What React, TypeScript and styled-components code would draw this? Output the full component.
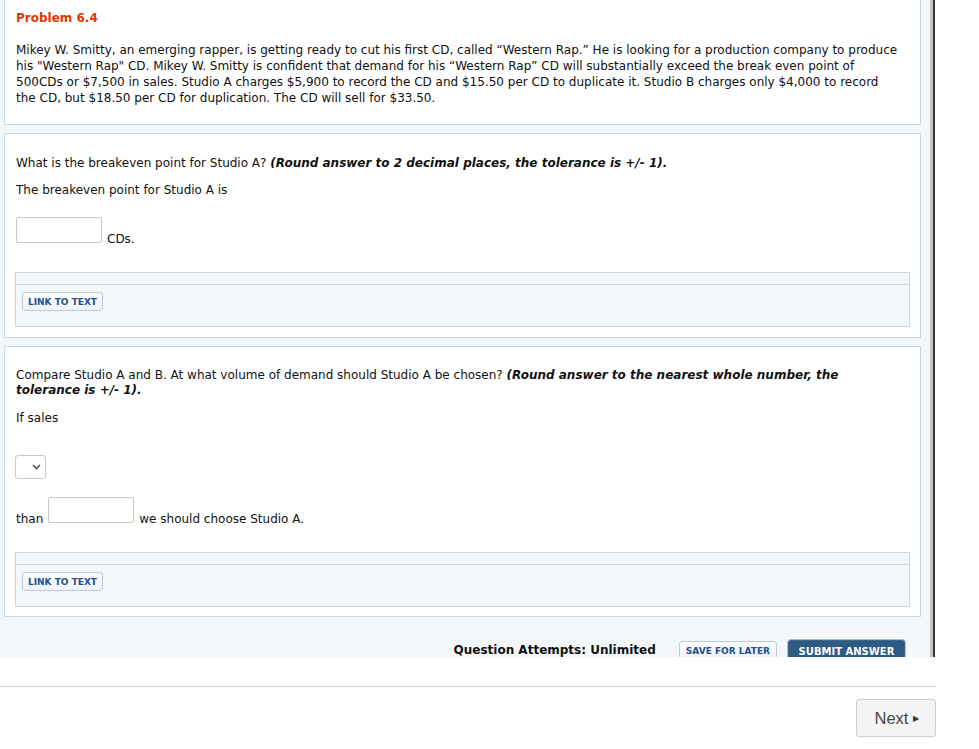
import React from "react";
import styled, { createGlobalStyle } from "styled-components";

const GlobalStyle = createGlobalStyle`
  html, body {
    margin: 0;
    padding: 0;
    background: #fff;
  }
  body {
    font-family: "DejaVu Sans", Verdana, sans-serif;
    font-size: 12px;
    color: #111;
  }
`;

function LinkBox() {
  return (
    <LinkPanel>
      <LinkHeader />
      <LinkBody>
        <SmallButton type="button">LINK TO TEXT</SmallButton>
      </LinkBody>
    </LinkPanel>
  );
}

function App() {
  return (
    <Page>
      <GlobalStyle />
      <Frame>
        <Scroller>
          <Panel $top={19} $bottom={18}>
            <Title>Problem 6.4</Title>
            <Text $mt={16}>
              Mikey W. Smitty, an emerging rapper, is getting ready to cut his first CD, called
              “Western Rap.” He is looking for a production company to produce
              <br />
              his "Western Rap" CD. Mikey W. Smitty is confident that demand for his “Western Rap”
              CD will substantially exceed the break even point of
              <br />
              500CDs or $7,500 in sales. Studio A charges $5,900 to record the CD and $15.50 per CD
              to duplicate it. Studio B charges only $4,000 to record
              <br />
              the CD, but $18.50 per CD for duplication. The CD will sell for $33.50.
            </Text>
          </Panel>

          <Panel $top={21} $bottom={10}>
            <Text>
              What is the breakeven point for Studio A?{" "}
              <Hint>(Round answer to 2 decimal places, the tolerance is +/- 1).</Hint>
            </Text>
            <Text $mt={11}>The breakeven point for Studio A is</Text>
            <AnswerRow $mt={19}>
              <AnswerInput />
              <span>CDs.</span>
            </AnswerRow>
            <LinkBox />
          </Panel>

          <Panel $top={21} $bottom={9}>
            <Text $lh={15}>
              Compare Studio A and B. At what volume of demand should Studio A be chosen?{" "}
              <Hint>
                (Round answer to the nearest whole number, the
                <br />
                tolerance is +/- 1).
              </Hint>
            </Text>
            <Text $mt={12}>If sales</Text>
            <SelectBox>
              <svg width="9" height="6" viewBox="0 0 9 6">
                <path d="M1 1 L4.5 4.5 L8 1" fill="none" stroke="#555" strokeWidth="1.7" />
              </svg>
            </SelectBox>
            <AnswerRow $mt={18}>
              <span>than</span>
              <AnswerInput />
              <span>we should choose Studio A.</span>
            </AnswerRow>
            <LinkBox />
          </Panel>

          <Footer>
            <Attempts>Question Attempts: Unlimited</Attempts>
            <SmallButton type="button" $inFooter>
              SAVE FOR LATER
            </SmallButton>
            <SubmitButton type="button">SUBMIT ANSWER</SubmitButton>
          </Footer>
        </Scroller>
      </Frame>
      <Divider />
      <NavRow>
        <NextButton type="button">
          Next <Arrow>▶</Arrow>
        </NextButton>
      </NavRow>
    </Page>
  );
}
export default App;

const Page = styled.div`
  width: 979px;
  height: 749px;
  overflow: hidden;
`;

const Frame = styled.div`
  width: 930px;
  height: 657px;
  overflow: hidden;
  background: #f4f7fa;
  border-right: 3px solid #c4c4c4;
  box-shadow: 2px 0 0 #333;
`;

const Scroller = styled.div`
  margin-top: -10px;
  padding: 0 9px 0 4px;
  display: flex;
  flex-direction: column;
  gap: 8px;
`;

const Panel = styled.section<{ $top: number; $bottom: number }>`
  background: #fff;
  border: 1px solid #c9d6e4;
  padding: ${(p) => p.$top}px 10px ${(p) => p.$bottom}px 11px;
`;

const Title = styled.h2`
  margin: 0;
  font-size: 12px;
  line-height: 16px;
  font-weight: bold;
  color: #dd3a00;
`;

const Text = styled.p<{ $mt?: number; $lh?: number }>`
  margin: ${(p) => p.$mt ?? 0}px 0 0;
  line-height: ${(p) => p.$lh ?? 16}px;
  white-space: nowrap;
`;

const Hint = styled.b`
  font-style: italic;
`;

const AnswerRow = styled.div<{ $mt: number }>`
  margin-top: ${(p) => p.$mt}px;
  display: flex;
  align-items: flex-end;
  gap: 5px;
  line-height: 16px;
  span {
    margin-bottom: -4px;
  }
`;

const AnswerInput = styled.input`
  box-sizing: border-box;
  width: 86px;
  height: 26px;
  margin: 0;
  border: 1px solid #c8c8c8;
  border-radius: 2px;
  background: #fff;
`;

const SelectBox = styled.div`
  box-sizing: border-box;
  width: 31px;
  height: 24px;
  margin: 29px 0 0 -1px;
  border: 1px solid #c8c8c8;
  border-radius: 3px;
  background: #fff;
  display: flex;
  align-items: center;
  justify-content: center;
  padding-left: 12px;
`;

const LinkPanel = styled.div`
  margin: 29px 0 0 -1px;
  border: 1px solid #c9d6e4;
  background: #f4f7fa;
`;

const LinkHeader = styled.div`
  height: 11px;
  border-bottom: 1px solid #c9d6e4;
`;

const LinkBody = styled.div`
  height: 41px;
  padding: 7px 0 0 6px;
  box-sizing: border-box;
`;

const SmallButton = styled.button<{ $inFooter?: boolean }>`
  box-sizing: border-box;
  height: ${(p) => (p.$inFooter ? 20 : 19)}px;
  margin-top: ${(p) => (p.$inFooter ? 10 : 0)}px;
  padding: 0 ${(p) => (p.$inFooter ? 6 : 5)}px;
  border: 1px solid #bccbdb;
  border-radius: 3px;
  background: linear-gradient(#fbfcfd, #eef2f6);
  font-family: "DejaVu Sans", Verdana, sans-serif;
  font-size: 9px;
  font-weight: bold;
  color: #1f4f8f;
  white-space: nowrap;
  cursor: pointer;
`;

const Footer = styled.div`
  margin-top: 6px;
  display: flex;
  align-items: flex-start;
  justify-content: flex-end;
  padding-right: 15px;
  height: 40px;
`;

const Attempts = styled.span`
  font-weight: bold;
  font-size: 12px;
  line-height: 16px;
  white-space: nowrap;
  margin: 11px 23px 0 0;
`;

const SubmitButton = styled.button`
  box-sizing: border-box;
  width: 119px;
  height: 24px;
  margin: 8px 0 0 10px;
  padding: 0;
  border: 1px solid #a9bed3;
  border-radius: 4px;
  background: #2d5a82;
  box-shadow: inset 0 0 0 1px #3a6890;
  font-family: "DejaVu Sans", Verdana, sans-serif;
  font-size: 10px;
  font-weight: bold;
  color: #fff;
  white-space: nowrap;
  cursor: pointer;
`;

const Divider = styled.hr`
  width: 936px;
  margin: 29px 0 0;
  border: 0;
  border-top: 1px solid #cfcfcf;
`;

const NavRow = styled.div`
  width: 936px;
  display: flex;
  justify-content: flex-end;
  margin-top: 12px;
`;

const NextButton = styled.button`
  box-sizing: border-box;
  width: 80px;
  height: 38px;
  border: 1px solid #cfcfcf;
  border-radius: 3px;
  background: #f5f5f5;
  font-family: "Liberation Sans", Arial, sans-serif;
  font-size: 16.5px;
  color: #444;
  display: flex;
  align-items: center;
  justify-content: center;
  gap: 5px;
  padding: 0 0 0 2px;
  cursor: pointer;
`;

const Arrow = styled.span`
  font-size: 8px;
  color: #333;
`;
